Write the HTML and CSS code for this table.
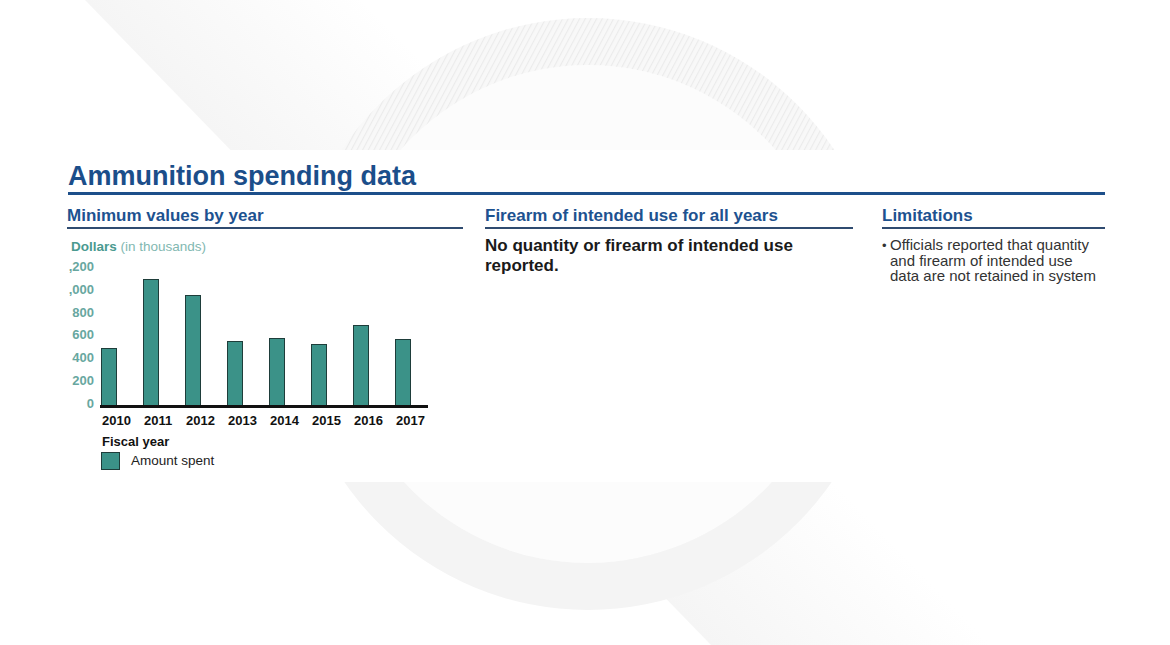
FILE: index.html
```html
<!DOCTYPE html>
<html lang="en">
<head>
<meta charset="utf-8">
<title>Ammunition spending data</title>
<link rel="stylesheet" href="styles.css">
</head>
<body>
<div class="bg" aria-hidden="true">
  <svg width="1170" height="645" viewBox="0 0 1170 645">
    <defs>
      <linearGradient id="band" gradientUnits="userSpaceOnUse" x1="85" y1="0" x2="229" y2="-140">
        <stop offset="0" stop-color="#f5f5f5"/>
        <stop offset="0.5" stop-color="#fafafa"/>
        <stop offset="1" stop-color="#ffffff"/>
      </linearGradient>
      <pattern id="hatch" patternUnits="userSpaceOnUse" width="5" height="5" patternTransform="rotate(28)">
        <rect width="5" height="5" fill="#f8f8f8"/>
        <line x1="0.5" y1="0" x2="0.5" y2="5" stroke="#ebebeb" stroke-width="1.2"/>
      </pattern>
      <clipPath id="topHalf"><rect x="0" y="0" width="1170" height="330"/></clipPath>
      <clipPath id="bottomHalf"><rect x="0" y="330" width="1170" height="315"/></clipPath>
    </defs>
    <polygon points="85,0 360,0 1010,645 711,645" fill="url(#band)"/>
    <circle cx="588" cy="314" r="249" fill="#fcfcfc"/>
    <g clip-path="url(#topHalf)">
      <path fill-rule="evenodd" fill="url(#hatch)" d="M292,314 a296,296 0 1,0 592,0 a296,296 0 1,0 -592,0 Z M339,314 a249,249 0 1,0 498,0 a249,249 0 1,0 -498,0 Z"/>
    </g>
    <g clip-path="url(#bottomHalf)">
      <path fill-rule="evenodd" fill="#f4f4f4" d="M292,314 a296,296 0 1,0 592,0 a296,296 0 1,0 -592,0 Z M339,314 a249,249 0 1,0 498,0 a249,249 0 1,0 -498,0 Z"/>
    </g>
  </svg>
</div>

<main class="panel">
  <h1 class="title">Ammunition spending data</h1>
  <div class="cols">
    <section class="col col-chart">
      <h2 class="heading">Minimum values by year</h2>
      <div class="chart">
        <div class="chart-title"><b>Dollars</b> (in thousands)</div>
        <div class="plot">
          <div class="yaxis">
            <span>,200</span>
            <span>,000</span>
            <span>800</span>
            <span>600</span>
            <span>400</span>
            <span>200</span>
            <span>0</span>
          </div>
          <div class="bars">
            <div class="bar" style="height:57px"></div>
            <div class="bar" style="height:126px"></div>
            <div class="bar" style="height:110px"></div>
            <div class="bar" style="height:64px"></div>
            <div class="bar" style="height:67px"></div>
            <div class="bar" style="height:61px"></div>
            <div class="bar" style="height:80px"></div>
            <div class="bar" style="height:66px"></div>
          </div>
        </div>
        <div class="xaxis">
          <span>2010</span><span>2011</span><span>2012</span><span>2013</span><span>2014</span><span>2015</span><span>2016</span><span>2017</span>
        </div>
        <div class="xtitle">Fiscal year</div>
        <div class="legend"><span class="swatch"></span><span class="legend-label">Amount spent</span></div>
      </div>
    </section>

    <section class="col col-firearm">
      <h2 class="heading">Firearm of intended use for all years</h2>
      <p class="statement">No quantity or firearm of intended use reported.</p>
    </section>

    <section class="col col-limits">
      <h2 class="heading">Limitations</h2>
      <ul class="limits">
        <li>Officials reported that quantity<br>and firearm of intended use<br>data are not retained in system</li>
      </ul>
    </section>
  </div>
</main>
</body>
</html>
```
FILE: styles.css
```css
html, body {
  margin: 0;
  padding: 0;
}

body {
  width: 1170px;
  height: 645px;
  overflow: hidden;
  position: relative;
  background: #ffffff;
  font-family: "Liberation Sans", Arial, sans-serif;
  color: #1a1a1a;
}

.bg {
  position: absolute;
  left: 0;
  top: 0;
  z-index: 0;
  line-height: 0;
}

.panel {
  position: relative;
  z-index: 1;
  margin-top: 150px;
  height: 332px;
  box-sizing: border-box;
  padding: 11px 65px 0 67px;
  background: #ffffff;
}

.title {
  margin: 0 0 0 1px;
  font-size: 27px;
  line-height: 30px;
  font-weight: bold;
  color: #1b4e8a;
  padding-bottom: 1px;
  border-bottom: 3px solid #1d4f8a;
}

.cols {
  display: grid;
  grid-template-columns: 396px 368px 1fr;
  column-gap: 22px;
  margin-top: 11px;
}

.col-limits {
  margin-left: 7px;
}

.heading {
  margin: 0;
  font-size: 17px;
  line-height: 20px;
  font-weight: bold;
  color: #1d5290;
  padding-bottom: 1px;
  border-bottom: 2px solid #2f4b70;
}

/* chart */
.chart {
  margin-left: -1px;
}

.chart-title {
  margin-top: 10px;
  padding-left: 5px;
  font-size: 13.5px;
  line-height: 16px;
  color: #82b8b1;
  white-space: nowrap;
}

.chart-title b {
  color: #4a9a90;
}

.plot {
  display: flex;
  align-items: flex-start;
  margin-top: 5px;
}

.yaxis {
  flex: none;
  width: 28px;
  height: 151px;
  display: flex;
  flex-direction: column;
  justify-content: space-between;
  align-items: flex-end;
  font-size: 13px;
  font-weight: bold;
  line-height: 14px;
  color: #68a7a0;
  white-space: nowrap;
}

.bars {
  flex: none;
  margin-left: 6px;
  width: 327px;
  height: 145px;
  padding-left: 1px;
  border-bottom: 3px solid #111111;
  display: flex;
  align-items: flex-end;
  gap: 26px;
}

.bar {
  flex: none;
  width: 16px;
  box-sizing: border-box;
  background: #3b9288;
  border: 1px solid #1e3d3a;
  border-bottom: 0;
}

.xaxis {
  display: flex;
  margin-top: 2px;
  padding-left: 36px;
  font-size: 13px;
  font-weight: bold;
  line-height: 15px;
  color: #111111;
}

.xaxis span {
  flex: none;
  width: 42px;
}

.xtitle {
  margin-top: 6px;
  padding-left: 36px;
  font-size: 13px;
  font-weight: bold;
  line-height: 15px;
  color: #111111;
}

.legend {
  display: flex;
  align-items: center;
  margin-top: 3px;
  padding-left: 35px;
}

.swatch {
  flex: none;
  width: 19px;
  height: 18px;
  box-sizing: border-box;
  background: #3b9288;
  border: 1.5px solid #1e3d3a;
}

.legend-label {
  margin-left: 11px;
  font-size: 13.5px;
  line-height: 16px;
  color: #222222;
}

/* middle column */
.statement {
  margin: 7px 0 0;
  font-size: 17px;
  line-height: 20px;
  font-weight: bold;
  color: #1a1a1a;
}

/* limitations */
.limits {
  margin: 8px 0 0;
  padding: 0;
  list-style: none;
  font-size: 15px;
  line-height: 15px;
  color: #333333;
}

.limits li {
  padding-left: 8px;
  text-indent: -8px;
}

.limits li::before {
  content: "\2022";
  display: inline-block;
  width: 8px;
  text-indent: 0;
  font-size: 13px;
  line-height: 15px;
}
```
